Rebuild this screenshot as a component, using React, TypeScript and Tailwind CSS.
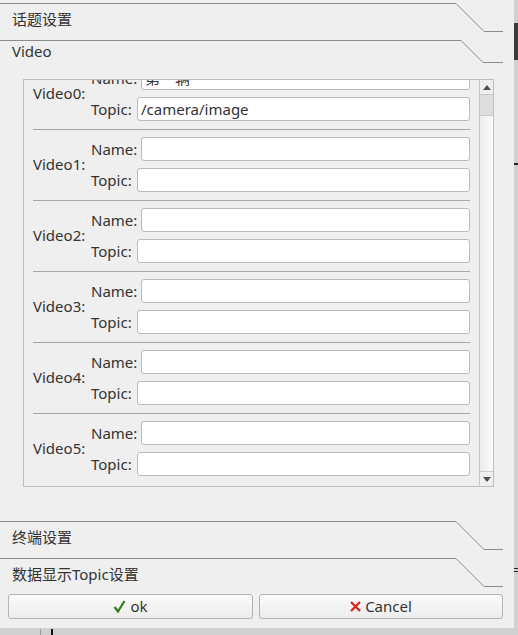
import React from 'react';

const font = { fontFamily: '"Noto Sans", "Noto Sans CJK SC", sans-serif' };

type HeaderProps = {
  label: string;
  height: number;
  drop: number;
  start: number;
  textPad: string;
};

const TabHeader = ({ label, drop, start, textPad, height }: HeaderProps) => (
  <div className="relative w-[503px] shrink-0" style={{ height }}>
    <svg className="absolute left-0 top-0" width="504" height="32" viewBox="0 0 504 32">
      <path
        d={`M0 0.5 H${start} L${start + drop} ${drop + 0.5} H503`}
        fill="none"
        stroke="#8c8c8c"
        strokeWidth="1"
      />
    </svg>
    <div className={`pl-[12px] text-[15px] leading-[20px] text-[#333] ${textPad}`}>{label}</div>
  </div>
);

const videos = [
  { name: '第一辆', topic: '/camera/image' },
  { name: '', topic: '' },
  { name: '', topic: '' },
  { name: '', topic: '' },
  { name: '', topic: '' },
  { name: '', topic: '' },
];

const Field = ({ label, value, labelW }: { label: string; value: string; labelW: string }) => (
  <div className="flex h-[24px] items-center">
    <span className={`${labelW} shrink-0 text-[15px] text-[#333]`}>{label}</span>
    <div className="flex h-[24px] flex-1 items-center overflow-hidden rounded-[3px] border border-[#bababa] bg-white pl-[3px] text-[15px] text-[#333]">
      {value}
    </div>
  </div>
);

const Arrow = ({ up }: { up?: boolean }) => (
  <div className="flex h-[14px] items-center justify-center bg-[#efefef]">
    <svg width="8" height="5" viewBox="0 0 8 5">
      <path d={up ? 'M0 5 L4 0 L8 5 Z' : 'M0 0 L4 5 L8 0 Z'} fill="#505050" />
    </svg>
  </div>
);

export default function App() {
  return (
    <div className="relative h-[635px] w-[518px] overflow-hidden bg-[#d0d0d0]" style={font}>
      {/* windows behind the dialog */}
      <div className="absolute left-[514px] top-[23px] h-[37px] w-[4px] bg-[#3a3a3a]" />
      <div className="absolute left-[514px] top-[163px] h-[2px] w-[4px] bg-[#222]" />
      <div className="absolute left-[514px] top-[568px] h-[1px] w-[4px] bg-[#222]" />
      <div className="absolute left-[514px] top-[571px] h-[1px] w-[4px] bg-[#222]" />
      <div className="absolute left-[40px] top-[629px] h-[6px] w-[1px] bg-[#9a9a9a]" />
      <div className="absolute left-[51px] top-[629px] h-[6px] w-[2px] bg-[#111]" />

      <div className="flex h-[628px] w-[514px] flex-col bg-[#efefef] pt-[3px]">
        <TabHeader label="话题设置" height={37} drop={28} start={456} textPad="pt-[6px]" />
        <TabHeader label="Video" height={39} drop={22} start={461} textPad="pt-[1px]" />

        <div className="ml-[23px] flex h-[408px] w-[471px] shrink-0 border border-[#bdbdbd]">
          <div className="flex-1 overflow-hidden">
            <div className="mt-[-21px] px-[9px]">
              {videos.map((v, i) => (
                <div key={i}>
                  {i > 0 && <div className="h-px bg-[#a8a8a8]" />}
                  <div className="flex items-center pt-[7px] pb-[8px]">
                    <span className="w-[58px] shrink-0 text-[15px] text-[#333]">Video{i}:</span>
                    <div className="flex flex-1 flex-col gap-[7px]">
                      <Field label="Name:" value={v.name} labelW="w-[50px]" />
                      <Field label="Topic:" value={v.topic} labelW="w-[46px]" />
                    </div>
                  </div>
                </div>
              ))}
            </div>
          </div>
          <div className="flex w-[14px] shrink-0 flex-col border-l border-[#c6c6c6]">
            <Arrow up />
            <div className="h-[22px] border-y border-[#c8c8c8] bg-[#dedede]" />
            <div className="flex-1 bg-gradient-to-r from-[#ececec] to-[#fbfbfb]" />
            <div className="border-t border-[#c8c8c8]">
              <Arrow />
            </div>
          </div>
        </div>

        <div className="h-[34px] shrink-0" />
        <TabHeader label="终端设置" height={37} drop={28} start={456} textPad="pt-[6px]" />
        <TabHeader label="数据显示Topic设置" height={36} drop={28} start={456} textPad="pt-[6px]" />

        <div className="flex gap-[6px] pl-[8px]">
          <button className="flex h-[25px] w-[245px] items-center justify-center gap-[4px] rounded-[3px] border border-[#b4b4b4] bg-gradient-to-b from-[#fbfbfb] to-[#ececec] text-[15px] text-[#333]">
            <svg width="13" height="13" viewBox="0 0 13 13">
              <path d="M1.5 7 L5 11.5 L11.5 1" fill="none" stroke="#2f7d1f" strokeWidth="2.2" />
            </svg>
            ok
          </button>
          <button className="flex h-[25px] w-[244px] items-center justify-center gap-[4px] rounded-[3px] border border-[#b4b4b4] bg-gradient-to-b from-[#fbfbfb] to-[#ececec] text-[15px] text-[#333]">
            <svg width="11" height="11" viewBox="0 0 11 11">
              <path d="M1 1 L10 10 M10 1 L1 10" fill="none" stroke="#d8291c" strokeWidth="2.4" />
            </svg>
            Cancel
          </button>
        </div>
      </div>
    </div>
  );
}
